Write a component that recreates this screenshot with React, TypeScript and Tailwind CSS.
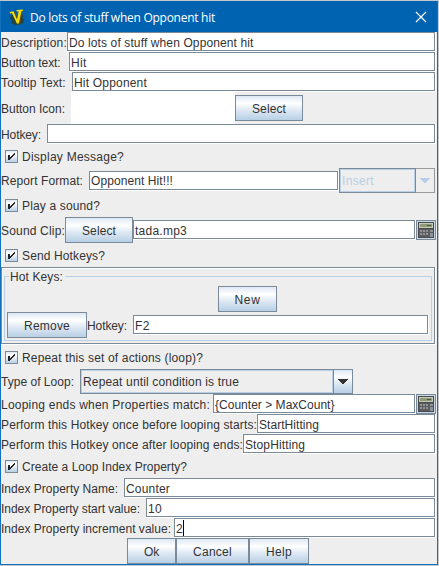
import React from "react";

const FONT = '"Liberation Sans", Arial, sans-serif';
const TITLE_FONT = '"Open Sans", "Noto Sans", sans-serif';
const ctx = document.createElement("canvas").getContext("2d")!;

/* Text tracked out so that its advance equals the given width. */
function T({ text, w, title = false }: { text: string; w: number; title?: boolean }) {
  ctx.font = `12px ${title ? TITLE_FONT : FONT}`;
  const tracking = (w - ctx.measureText(text).width) / text.length;
  return (
    <span className="relative top-px whitespace-pre" style={{ letterSpacing: `${tracking}px` }}>
      {text}
    </span>
  );
}

/* Etched text field, 20px high. */
function Field({ className = "flex-1", children }: { className?: string; children?: React.ReactNode }) {
  return (
    <div className={`h-5 border-r border-b border-white ${className}`}>
      <div className="flex h-full items-center border border-[#7a8a99] bg-white pl-px">{children}</div>
    </div>
  );
}

function Button({ className, children }: { className: string; children: React.ReactNode }) {
  return (
    <div
      className={`flex h-[26px] shrink-0 items-center justify-center border border-[#7a8a99] bg-[linear-gradient(#dde8f3_0%,#ffffff_30%,#dde8f3_60%,#b8cfe5_100%)] ${className}`}
    >
      {children}
    </div>
  );
}

function Row({ label, labelClass, w, children }: { label: string; labelClass: string; w: number; children?: React.ReactNode }) {
  return (
    <div className="flex h-5 items-center">
      <div className={`shrink-0 ${labelClass}`}>
        <T text={label} w={w} />
      </div>
      <Field>{children}</Field>
    </div>
  );
}

function Check({ text, w }: { text: string; w: number }) {
  return (
    <div className="flex h-6 items-center pl-1">
      <svg width="13" height="13" viewBox="0 0 13 13" shapeRendering="crispEdges" className="mr-1 shrink-0">
        <defs>
          <linearGradient id="box" x1="0" y1="0" x2="0" y2="1">
            <stop offset="0" stopColor="#dde8f3" />
            <stop offset=".3" stopColor="#fff" />
            <stop offset=".6" stopColor="#dde8f3" />
            <stop offset="1" stopColor="#b8cfe5" />
          </linearGradient>
        </defs>
        <rect width="13" height="13" fill="#7a8a99" />
        <rect x="1" y="1" width="11" height="11" fill="url(#box)" />
        <path
          fill="#222"
          d="M3 5h2v5h-2zM9 3h1v2h-1zM8 4h1v2h-1zM7 5h1v2h-1zM6 6h1v2h-1zM5 7h1v2h-1z"
        />
      </svg>
      <T text={text} w={w} />
    </div>
  );
}

function Arrow({ color }: { color: string }) {
  return (
    <svg width="10" height="5" viewBox="0 0 10 5" shapeRendering="crispEdges">
      <path fill={color} d="M0 0h10v1h-10zM1 1h8v1h-8zM2 2h6v1h-6zM3 3h4v1h-4zM4 4h2v1h-2z" />
    </svg>
  );
}

function Calculator() {
  return (
    <svg width="20" height="20" viewBox="0 0 20 20" shapeRendering="crispEdges" className="shrink-0">
      <rect width="20" height="20" fill="#7a8a99" />
      <rect x="1" y="1" width="18" height="18" fill="#c5d8ea" />
      <rect x="2" y="2" width="16" height="16" fill="#4a4b4d" />
      <rect x="3" y="3" width="14" height="5" fill="#c3c9b5" />
      <rect x="4" y="4" width="12" height="3" fill="#8f9b78" />
      <rect x="11" y="5" width="4" height="1" fill="#4d5a40" />
      <rect x="3" y="9" width="14" height="8" fill="#5c5d60" />
      <path
        fill="#919295"
        d="M4 10h2v2h-2zM7 10h2v2h-2zM10 10h2v2h-2zM14 10h3v2h-3zM4 13h2v2h-2zM7 13h2v2h-2zM10 13h2v2h-2zM14 13h3v4h-3z"
      />
    </svg>
  );
}

function Logo() {
  return (
    <svg width="16" height="16" viewBox="0 0 16 16" className="shrink-0">
      <path fill="#24443c" d="M2 6l3-1 3 2 4-3 2 2-.5 3 1.500 2-1 3-3 1.500-5 .5-4-2 1-2-2-3z" />
      <path fill="#5c4a1c" d="M4 2.500l2 .5 2.500 7L10 2h3.500L11 15.500H8.500z" />
      <path fill="#f4d90f" d="M.8 3l3.700-.8L8 10.500 9.600 2.600 7.500 2.300V1L14 .4v1.400l-1.600.6L9.800 14.500H7.900L3 4.300 1 4.400z" />
    </svg>
  );
}

export default function App() {
  return (
    <div
      className="h-[566px] w-[439px] overflow-hidden bg-[#c5c8ca] pt-px text-[12px] leading-[14px] text-[#333]"
      style={{ fontFamily: FONT }}
    >
      <div className="h-[564px] w-[438px] border-x border-b border-[#1271bd] bg-[#eee]">
        <div className="flex h-[31px] items-center justify-between bg-[#0063b1] pr-[9px] pl-2 text-white">
          <div className="flex items-center gap-[5px]" style={{ fontFamily: TITLE_FONT }}>
            <Logo />
            <T text="Do lots of stuff when Opponent hit" w={185} title />
          </div>
          <svg width="12" height="12" viewBox="0 0 12 12" className="mr-px">
            <path d="M1 1l10 10M11 1L1 11" stroke="#fff" strokeWidth="1.2" />
          </svg>
        </div>

        <div className="w-[435px]">
          <Row label="Description:" labelClass="w-[66px]" w={66}>
            <T text="Do lots of stuff when Opponent hit" w={184.5} />
          </Row>
          <Row label="Button text:" labelClass="w-[68px]" w={59.5}>
            <T text="Hit" w={15.5} />
          </Row>
          <Row label="Tooltip Text:" labelClass="w-[71px]" w={65}>
            <T text="Hit Opponent" w={73} />
          </Row>

          <div className="flex h-8 items-center">
            <div className="w-[70px]">
              <T text="Button Icon:" w={64} />
            </div>
            <div className="h-8 w-[164px] bg-white" />
            <Button className="w-[68px]">
              <T text="Select" w={34} />
            </Button>
          </div>

          <Row label="Hotkey:" labelClass="w-[46px]" w={40} />
          <Check text="Display Message?" w={102} />

          <div className="flex h-[25px] items-center">
            <div className="w-[88px] pb-px">
              <T text="Report Format:" w={82} />
            </div>
            <Field className="w-[250px]">
              <T text="Opponent Hit!!!" w={82} />
            </Field>
            <div className="h-[25px] w-[77px] border border-[#7a8a99]">
              <div className="flex h-full items-center border border-[#b8cfe5] pb-px pl-px text-[#b8cfe5]">
                <T text="Insert" w={32} />
              </div>
            </div>
            <div className="flex h-[25px] w-[19px] items-center justify-center border border-l-0 border-[#999]">
              <Arrow color="#b8cfe5" />
            </div>
          </div>

          <Check text="Play a sound?" w={78} />
          <div className="flex h-[26px] items-center">
            <div className="w-16">
              <T text="Sound Clip:" w={64} />
            </div>
            <Button className="w-[68px]">
              <T text="Select" w={34} />
            </Button>
            <Field>
              <T text="tada.mp3" w={52} />
            </Field>
            <Calculator />
          </div>
          <Check text="Send Hotkeys?" w={83} />

          <div className="h-[78px] border-r border-b border-white">
            <div className="h-full border border-[#7a8a99]">
              <div className="h-full border-t border-l border-white pt-[7px] pr-0.5 pb-0.5 pl-px">
                <div className="h-[65px] border border-[#b8cfe5] px-0.5">
                  <div className="-mt-2 ml-0.5 h-[15px] w-[56px] bg-[#eee] pl-px">
                    <T text="Hot Keys:" w={53} />
                  </div>
                  <div className="mt-0.5 flex pl-[211px]">
                    <Button className="w-[59px]">
                      <T text="New" w={26} />
                    </Button>
                  </div>
                  <div className="flex items-center">
                    <Button className="w-20">
                      <T text="Remove" w={46} />
                    </Button>
                    <div className="w-[46px]">
                      <T text="Hotkey:" w={40} />
                    </div>
                    <Field>
                      <T text="F2" w={15} />
                    </Field>
                  </div>
                </div>
              </div>
            </div>
          </div>

          <Check text="Repeat this set of actions (loop)?" w={181} />
          <div className="flex h-[25px] items-center">
            <div className="w-[79px] pb-px">
              <T text="Type of Loop:" w={73} />
            </div>
            <div className="h-[25px] w-[253px] border border-r-0 border-[#7a8a99]">
              <div className="flex h-full items-center border border-[#b8cfe5] pb-px pl-px">
                <T text="Repeat until condition is true" w={156} />
              </div>
            </div>
            <Button className="h-[25px]! w-5">
              <Arrow color="#333" />
            </Button>
          </div>

          <div className="flex h-5 items-center">
            <div className="w-[212px]">
              <T text="Looping ends when Properties match:" w={209} />
            </div>
            <Field>
              <T text="{Counter > MaxCount}" w={119.5} />
            </Field>
            <Calculator />
          </div>
          <Row label="Perform this Hotkey once before looping starts:" labelClass="w-[256px]" w={256}>
            <T text="StartHitting" w={60} />
          </Row>
          <Row label="Perform this Hotkey once after looping ends:" labelClass="w-[242px]" w={242}>
            <T text="StopHitting" w={60} />
          </Row>
          <Check text="Create a Loop Index Property?" w={165} />
          <Row label="Index Property Name:" labelClass="w-[123px]" w={117}>
            <T text="Counter" w={44} />
          </Row>
          <Row label="Index Property start value:" labelClass="w-[145px]" w={139}>
            <T text="10" w={14} />
          </Row>
          <Row label="Index Property increment value:" labelClass="w-[173px]" w={170}>
            <T text="2" w={7} />
            <div className="h-4 w-px bg-black" />
          </Row>

          <div className="flex pl-[126px]">
            <Button className="w-[49px]">
              <T text="Ok" w={15} />
            </Button>
            <Button className="w-[73px]">
              <T text="Cancel" w={39} />
            </Button>
            <Button className="w-[60px]">
              <T text="Help" w={26} />
            </Button>
          </div>
        </div>
      </div>
    </div>
  );
}
